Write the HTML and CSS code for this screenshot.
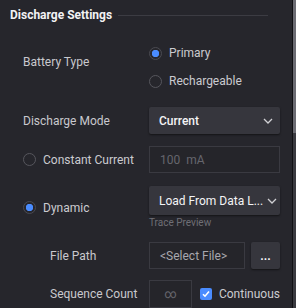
FILE: index.html
```html
<!DOCTYPE html>
<html lang="en">
  <head>
    <meta charset="UTF-8" />
    <meta name="viewport" content="width=device-width, initial-scale=1.0" />
    <title>Discharge Settings</title>
    <link rel="stylesheet" href="styles.css">
  </head>
  <body>
    <div class="app">
      <main class="panel">
        <div class="section-head">
          <h2>Discharge Settings</h2>
          <span class="rule"></span>
        </div>

        <!-- Battery type -->
        <div class="row battery">
          <span class="label">Battery Type</span>
          <div class="radio-list">
            <label class="radio checked"><span class="dot"></span>Primary</label>
            <label class="radio"><span class="dot"></span>Rechargeable</label>
          </div>
        </div>

        <!-- Mode -->
        <div class="row">
          <span class="label">Discharge Mode</span>
          <div class="select">
            <span class="value">Current</span>
            <svg class="chevron" width="10" height="6" viewBox="0 0 10 6"><path d="M1 1l4 4 4-4" fill="none" stroke="#d0d0d4" stroke-width="1.3"/></svg>
          </div>
        </div>

        <div class="row">
          <label class="radio label-radio"><span class="dot"></span>Constant Current</label>
          <div class="input muted">100&nbsp;&nbsp;mA</div>
        </div>

        <div class="row">
          <label class="radio label-radio checked"><span class="dot"></span>Dynamic</label>
          <div class="stack">
            <div class="select">
              <span class="value long">Load From Data L...</span>
              <svg class="chevron" width="10" height="6" viewBox="0 0 10 6"><path d="M1 1l4 4 4-4" fill="none" stroke="#d0d0d4" stroke-width="1.3"/></svg>
            </div>
            <span class="hint">Trace Preview</span>
          </div>
        </div>

        <div class="row sub">
          <span class="label">File Path</span>
          <div class="file-pick">
            <div class="input path">&lt;Select File&gt;</div>
            <button class="browse">...</button>
          </div>
        </div>

        <div class="row sub">
          <span class="label">Sequence Count</span>
          <div class="count">
            <div class="input muted small">∞</div>
            <label class="check">
              <span class="box"><svg width="10" height="10" viewBox="0 0 10 10"><path d="M2 5.2l2 2 4-4.6" fill="none" stroke="#fff" stroke-width="1.6"/></svg></span>
              Continuous
            </label>
          </div>
        </div>
      </main>
      <div class="scrollbar"><div class="thumb"></div></div>
    </div>
  </body>
</html>
```

FILE: styles.css
```css
/* General */
body {
  margin: 0;
  background: #26262c;
  font-family: Roboto, "Noto Sans", sans-serif;
  font-size: 12px;
  color: #c9c9ce;
  overflow: hidden;
}

.app {
  display: flex;
  height: 100vh;
}

.panel {
  flex: 1;
}

/* Scrollbar */
.scrollbar {
  width: 3px;
  border-left: 1px solid #111114;
  background: #3a3a40;
}

.scrollbar .thumb {
  height: 133px;
  background: #6c6c73;
}

/* Section heading */
.section-head {
  display: flex;
  align-items: center;
  gap: 6px;
  padding: 8px 24px 0 10px;
}

.section-head h2 {
  margin: 0;
  font-size: 12px;
  line-height: 14px;
  font-weight: 700;
  color: #f2f2f4;
}

.rule {
  flex: 1;
  height: 1px;
  background: #3c3c43;
}

/* Rows */
.row {
  display: grid;
  grid-template-columns: 149px 131px;
  align-items: center;
  margin-top: 12px;
}

.label {
  padding-left: 23px;
  line-height: 16px;
}

.row.sub .label {
  padding-left: 50px;
}

.row.sub:last-child {
  margin-top: 11px;
}

.row.battery {
  margin-top: 17px;
  align-items: start;
}

.row.battery .label {
  padding-top: 15px;
}

/* Radios */
.radio-list {
  display: flex;
  flex-direction: column;
}

.radio {
  display: flex;
  align-items: center;
  height: 28px;
  color: #cbcbd0;
}

.label-radio {
  padding-left: 23px;
  height: auto;
}

.radio .dot {
  width: 13px;
  height: 13px;
  box-sizing: border-box;
  border: 1.5px solid #56565d;
  border-radius: 50%;
  margin-right: 7px;
}

.radio.checked .dot {
  border-color: #4a4a51;
  background: radial-gradient(circle, #4a8cff 0 3.4px, transparent 4px);
}

/* Select */
.select {
  display: flex;
  align-items: center;
  height: 27px;
  padding: 0 7px 0 10px;
  background: #36363d;
  border-radius: 2px;
  box-shadow: 0 1px 2px rgba(0, 0, 0, 0.5);
  color: #f4f4f6;
  font-weight: 500;
}

.select .value {
  flex: 1;
  white-space: nowrap;
  margin-right: 4px;
}

.select .value.long {
  font-weight: 400;
}

.chevron {
  flex-shrink: 0;
}

.stack {
  display: flex;
  flex-direction: column;
}

.stack .select {
  height: 29px;
  margin-top: 1px;
}

.hint {
  margin-top: 1px;
  font-size: 10px;
  line-height: 14px;
  color: #6f6f76;
}

/* Inputs */
.input {
  display: flex;
  align-items: center;
  height: 27px;
  box-sizing: border-box;
  padding-left: 10px;
  border: 1px solid #3a3a41;
  background: #25252a;
  color: #a8a8ae;
}

.input.muted {
  color: #66666d;
}

.input.small {
  width: 49px;
  height: 28px;
  padding: 0;
  justify-content: center;
}

.file-pick {
  display: flex;
  gap: 6px;
}

.input.path {
  flex: 1;
}

.browse {
  width: 29px;
  height: 27px;
  border: none;
  border-radius: 2px;
  background: #36363d;
  box-shadow: 0 1px 2px rgba(0, 0, 0, 0.5);
  color: #f4f4f6;
  font-family: inherit;
  font-weight: 700;
  font-size: 12px;
  padding: 0;
}

/* Checkbox */
.count {
  display: flex;
  align-items: center;
  white-space: nowrap;
}

.check {
  display: flex;
  align-items: center;
  margin-left: 8px;
  color: #cbcbd0;
}

.check .box {
  display: flex;
  align-items: center;
  justify-content: center;
  width: 12px;
  height: 12px;
  margin-right: 7px;
  border-radius: 2px;
  background: #4a8cff;
}
```
